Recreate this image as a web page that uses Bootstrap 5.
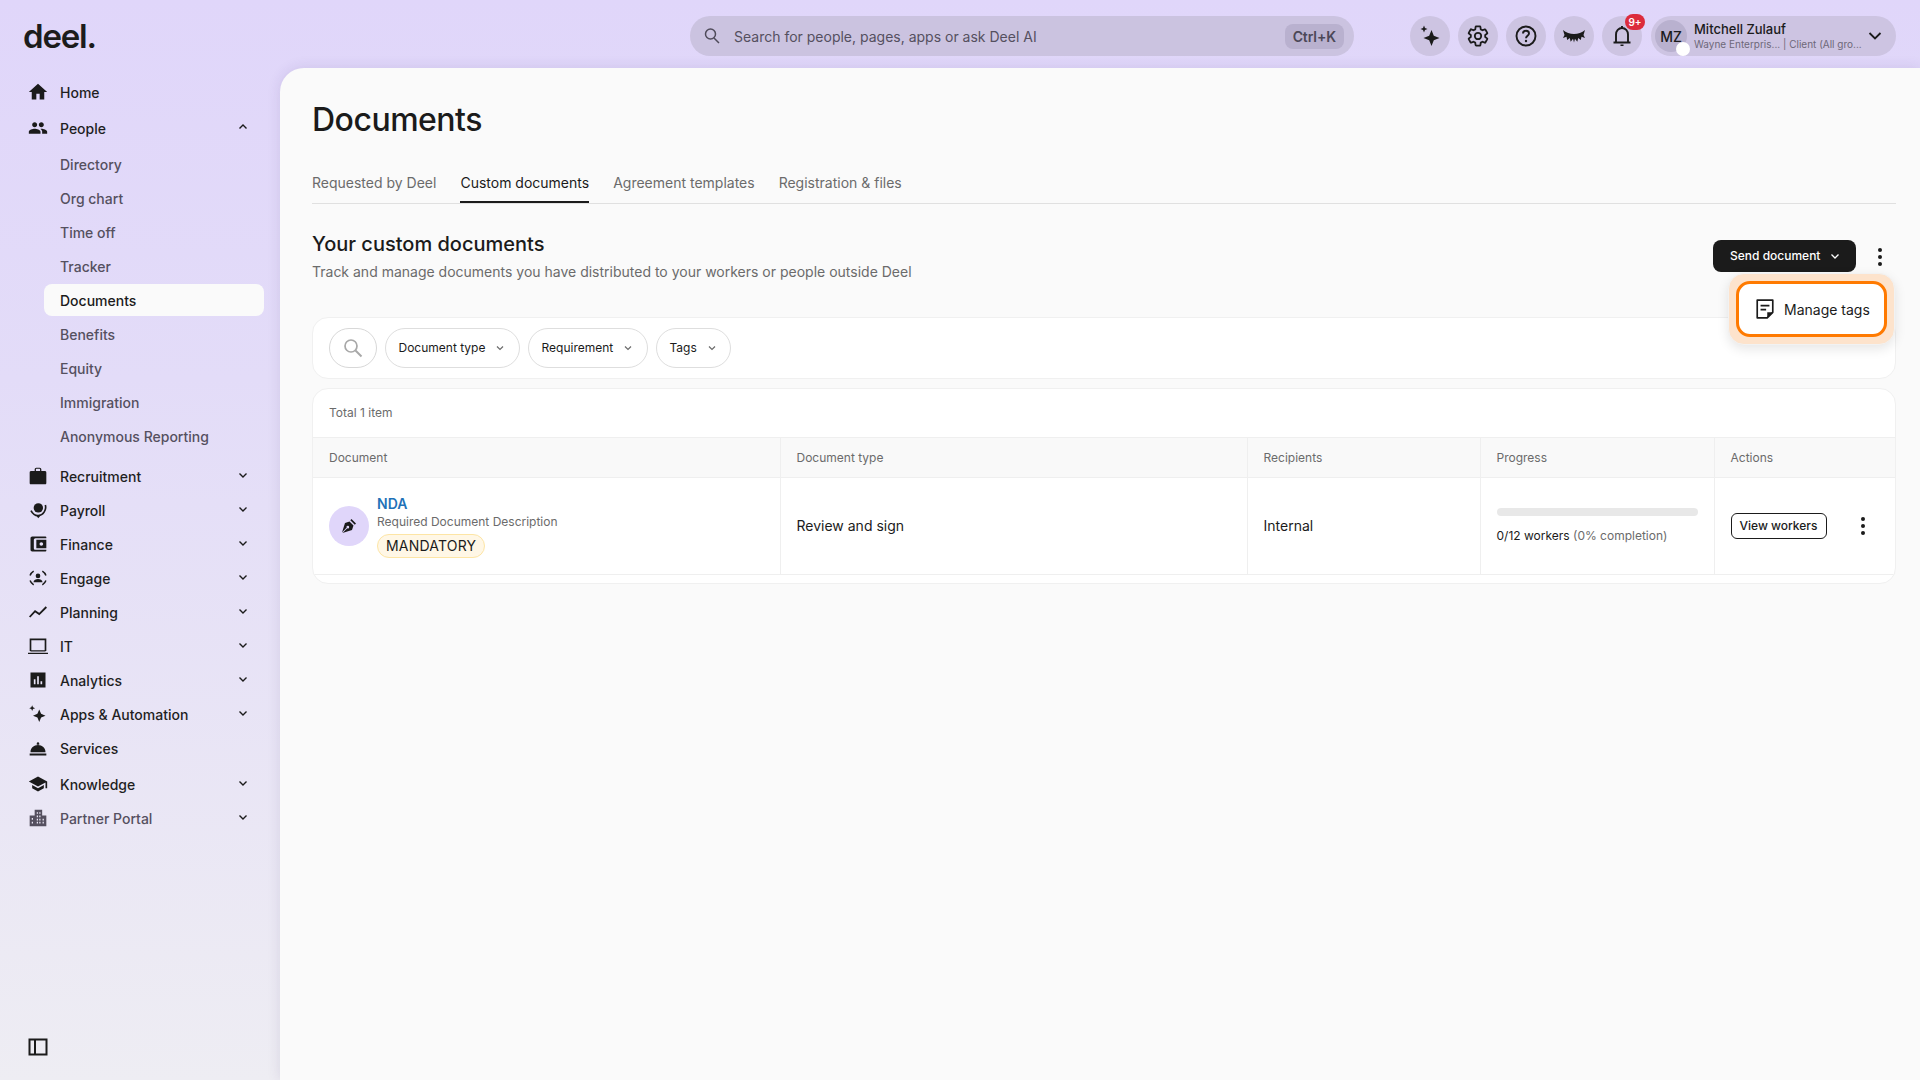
<!DOCTYPE html>
<html lang="en">
<head>
  <meta charset="UTF-8" />
  <meta name="viewport" content="width=device-width, initial-scale=1.0" />
  <title>Documents</title>
  <link href="https://cdn.jsdelivr.net/npm/bootstrap@5.3.0/dist/css/bootstrap.min.css" rel="stylesheet" />
  <style>
    body {
      font-family: Inter, "Liberation Sans", sans-serif;
      color: #1b1b1b;
      font-size: 14px;
      height: 100vh;
      overflow: hidden;
      background: linear-gradient(180deg, #e0d6fa 0%, #e3dcf8 35%, #eeedf3 100%);
    }
    /* sidebar */
    .side-col { width: 280px; flex: none; height: 100vh; position: relative; }
    .logo-box { height: 75px; padding: 14px 0 0 23px; font-size: 33px; font-weight: 600; letter-spacing: -1.2px; line-height: 44px; color: #1c1c1c; }
    .side-row { height: 34px; padding-left: 28px; font-weight: 500; gap: 12px; color: #1f1f1f; }
    .side-row .ico { width: 20px; height: 20px; flex: none; fill: #1b1b1b; }
    .side-row .chev { width: 10px; height: 10px; margin-left: auto; margin-right: 32px; margin-top: -2px; }
    .gap-t2 { margin-top: 2px; }
    .gap-t7 { margin-top: 7px; }
    .sub-list { margin-top: 3px; gap: 2px; }
    .sub-row { height: 32px; margin: 0 16px 0 44px; padding-left: 16px; color: #55505f; border-radius: 8px; font-weight: 450; }
    .sub-row.on { background: #fafafa; color: #1b1b1b; font-weight: 500; }
    .muted-row { color: #55505f; }
    .muted-row .ico { fill: #55505f; }
    .collapse-btn { position: absolute; left: 28px; bottom: 23px; width: 20px; height: 20px; }
    /* top bar */
    .right-col { flex: 1; min-width: 0; height: 100vh; }
    .top-strip { height: 68px; flex: none; padding: 16px 24px 0 410px; }
    .search-box { width: 664px; flex: none; height: 40px; border-radius: 20px; background: #cbc3e0; padding: 0 10px 0 12px; color: #55505f; margin-right: 48px; }
    .kbd-tag { margin-left: auto; background: #b9b1cf; border-radius: 8px; padding: 3px 8px; font-weight: 600; font-size: 14px; letter-spacing: -.1px; color: #4c4857; line-height: 19px; }
    .round-btn { width: 40px; height: 40px; border-radius: 50%; background: #cdc4e2; flex: none; position: relative; }
    .count-tag { position: absolute; top: -2px; right: -3px; background: #dc2c3c; color: #fff; font-size: 10px; font-weight: 600; border-radius: 8px; height: 16px; width: 20px; line-height: 16px; text-align: center; }
    .user-pill { width: 245px; flex: none; height: 40px; border-radius: 20px; background: #cdc4e2; padding: 0 14px 0 4px; margin-left: 1px; }
    .user-init { width: 32px; height: 32px; border-radius: 50%; background: #b9b1cf; font-size: 14px; position: relative; flex: none; font-weight: 500; margin-right: 7px; }
    .user-dot { position: absolute; right: -3px; bottom: -4px; width: 14px; height: 14px; border-radius: 50%; background: #fff; }
    .user-name { font-size: 13px; line-height: 15px; font-weight: 500; }
    .user-org { font-size: 10px; line-height: 14px; color: #6d6879; white-space: nowrap; }
    /* page */
    .page-area {
      flex: 1; background: #fafafa; border-top-left-radius: 24px;
      padding: 33px 24px 0 32px; box-shadow: 0 0 14px rgba(60, 40, 110, .12); position: relative;
    }
    .page-title { font-size: 32px; font-weight: 500; line-height: 38px; letter-spacing: -.5px; margin: 0; }
    .tab-strip { margin-top: 34px; border-bottom: 1px solid #e0e0e0; gap: 24px; }
    .tab-link { color: #6b6b6b; padding-bottom: 8px; line-height: 20px; border-bottom: 2px solid transparent; text-decoration: none; margin-bottom: -1px; height: 31px; }
    .tab-link.on { color: #1b1b1b; border-bottom-color: #1b1b1b; height: 30px; }
    .sec-head { margin-top: 28px; height: 85px; position: relative; }
    .sec-title { font-size: 20px; line-height: 24px; font-weight: 450; margin: 0 0 6px; }
    .sec-sub { color: #6b6b6b; line-height: 20px; margin: 0; }
    .send-btn { height: 32px; width: 143px; background: #1b1b1b; border-radius: 8px; color: #fff; font-size: 12px; font-weight: 500; border: 0; padding: 0 16px 0 17px; margin: 8px 40px 0 0; }
    .dot-col { display: flex; flex-direction: column; gap: 3px; align-items: center; width: 4px; }
    .dot-col i { width: 4px; height: 4px; border-radius: 50%; background: #1b1b1b; }
    .dots-top { position: absolute; right: 14px; top: 16px; }
    .tag-menu { position: absolute; right: 1px; top: 41px; width: 167px; height: 72px; border-radius: 16px; background: #fde3cc; border: 1px solid #f2f2f2; box-shadow: 0 4px 12px rgba(0, 0, 0, .1); padding: 7px; z-index: 5; }
    .tag-item { height: 56px; border: 3px solid #ff7a00; border-radius: 14px; background: #fff; padding-left: 16px; gap: 9px; }
    .panel-box { background: #fff; border: 1px solid #f0f0f0; border-radius: 16px; }
    .filter-box { height: 62px; padding: 0 16px; gap: 8px; }
    .chip-search { width: 48px; height: 40px; border-radius: 20px; border: 1px solid #d8d8d8; }
    .chip-btn { height: 40px; border: 1px solid #dedede; border-radius: 20px; background: #fff; font-size: 12px; padding: 0 12px 0 12.5px; color: #1b1b1b; font-weight: 400; gap: 10px; }
    .chip-doc { width: 135px; }
    .chip-req { width: 120px; }
    .chip-tag { width: 75px; }
    .list-box { margin-top: 9px; height: 196px; overflow: hidden; }
    .total-line { height: 48px; padding-left: 16px; font-size: 12px; color: #6b6b6b; display: flex; align-items: center; }
    .doc-table { table-layout: fixed; width: 100%; margin: 0; border-top: 1px solid #efefef; }
    .doc-table th { height: 40px; background: #f9f9f9; font-size: 12px; font-weight: 400; color: #6b6b6b; padding: 0 16px; vertical-align: middle; border-bottom: 1px solid #efefef; border-right: 1px solid #efefef; box-shadow: none; }
    .doc-table td { height: 97px; padding: 0 16px 1px; vertical-align: middle; border-bottom: 1px solid #efefef; border-right: 1px solid #efefef; color: #1b1b1b; box-shadow: none; }
    .doc-table th:last-child, .doc-table td:last-child { border-right: 0; }
    .c1, .c2 { width: 467px; }
    .c3 { width: 233px; }
    .c4 { width: 234px; }
    .doc-ava { width: 40px; height: 40px; border-radius: 50%; background: #e0d6fa; flex: none; }
    .doc-stack { margin-top: 2px; }
    .doc-name { color: #1f72b8; font-weight: 600; line-height: 18px; text-decoration: none; display: block; }
    .doc-desc { font-size: 12px; color: #6b6b6b; line-height: 18px; }
    .mand-tag { display: inline-block; background: #fff7e6; border: 1px solid #fde5a5; border-radius: 12px; height: 24px; line-height: 22px; padding: 0 8px; font-size: 14px; margin-top: 3px; letter-spacing: .2px; }
    .bar-track { height: 8px; background: #e8e8e8; border-radius: 4px; margin-bottom: 12px; }
    .prog-line { font-size: 12px; line-height: 16px; white-space: nowrap; }
    .prog-line span { color: #6b6b6b; }
    .view-btn { width: 96px; height: 26px; border: 1px solid #1b1b1b; border-radius: 6px; background: #fff; font-size: 12px; font-weight: 500; padding: 0; color: #1b1b1b; }
    .row-dots { margin-right: 14px; }
  </style>
</head>
<body>
  <div class="d-flex">
    <aside class="side-col">
      <div class="logo-box">deel.</div>
      <div class="side-row d-flex align-items-center">
        <svg class="ico" viewBox="0 0 24 24"><path d="M10 21v-7h4v7h5.5v-9H23L12 2 1 12h3.5v9z"/></svg>Home
      </div>
      <div class="side-row d-flex align-items-center gap-t2">
        <svg class="ico" viewBox="0 0 24 24"><path d="M16 11c1.66 0 2.99-1.34 2.99-3S17.66 5 16 5c-1.66 0-3 1.34-3 3s1.34 3 3 3zm-8 0c1.66 0 2.99-1.34 2.99-3S9.66 5 8 5C6.34 5 5 6.34 5 8s1.34 3 3 3zm0 2c-2.33 0-7 1.17-7 3.5V19h14v-2.5c0-2.33-4.67-3.5-7-3.5zm8 0c-.29 0-.62.02-.97.05 1.16.84 1.97 1.97 1.97 3.45V19h6v-2.5c0-2.33-4.67-3.5-7-3.5z"/></svg>People
        <svg class="chev" viewBox="0 0 10 10"><path d="M1.5 6.5 5 3l3.5 3.5" fill="none" stroke="#1b1b1b" stroke-width="1.4"/></svg>
      </div>
      <div class="sub-list d-flex flex-column">
        <div class="sub-row d-flex align-items-center">Directory</div>
        <div class="sub-row d-flex align-items-center">Org chart</div>
        <div class="sub-row d-flex align-items-center">Time off</div>
        <div class="sub-row d-flex align-items-center">Tracker</div>
        <div class="sub-row on d-flex align-items-center">Documents</div>
        <div class="sub-row d-flex align-items-center">Benefits</div>
        <div class="sub-row d-flex align-items-center">Equity</div>
        <div class="sub-row d-flex align-items-center">Immigration</div>
        <div class="sub-row d-flex align-items-center">Anonymous Reporting</div>
      </div>
      <div class="side-row d-flex align-items-center gap-t7">
        <svg class="ico" viewBox="0 0 24 24"><path fill-rule="evenodd" d="M8 6V4c0-1.100.9-2 2-2h4c1.100 0 2 .9 2 2v2h4.500c1.100 0 1.500.9 1.500 2v12c0 1.100-.4 2-1.500 2h-17C2.400 22 2 21.100 2 20V8c0-1.100.4-2 1.500-2zm1.500 0h5V4c0-.4-.2-.6-.6-.6h-3.800c-.4 0-.6.2-.6.6z"/></svg>Recruitment
        <svg class="chev" viewBox="0 0 10 10"><path d="M1.500 3.500 5 7l3.500-3.500" fill="none" stroke="#1b1b1b" stroke-width="1.400"/></svg>
      </div>
      <div class="side-row d-flex align-items-center">
        <svg class="ico" viewBox="0 0 24 24"><circle cx="12.400" cy="9.400" r="5.600"/><path d="M3.600 12.800C6 17.500 9 19 12.400 18.800 18 18.500 22.500 12 20.800 6" fill="none" stroke="#1b1b1b" stroke-width="2"/><path d="M9.800 18.500h5.200l-2.600 3.500z"/></svg>Payroll
        <svg class="chev" viewBox="0 0 10 10"><path d="M1.500 3.500 5 7l3.500-3.500" fill="none" stroke="#1b1b1b" stroke-width="1.400"/></svg>
      </div>
      <div class="side-row d-flex align-items-center">
        <svg class="ico" viewBox="0 0 24 24"><path fill-rule="evenodd" d="M5 3h16c.6 0 1 .4 1 1v1H9c-1.100 0-2 .9-2 2v10c0 1.100.9 2 2 2h13v1c0 .6-.4 1-1 1H5c-1.100 0-2-.9-2-2V5c0-1.100.9-2 2-2zm5 4h12v10H10zm6 2.800a2.200 2.200 0 1 0 0 4.400 2.200 2.200 0 0 0 0-4.400z"/></svg>Finance
        <svg class="chev" viewBox="0 0 10 10"><path d="M1.500 3.500 5 7l3.500-3.500" fill="none" stroke="#1b1b1b" stroke-width="1.400"/></svg>
      </div>
      <div class="side-row d-flex align-items-center">
        <svg class="ico" viewBox="0 0 24 24"><circle cx="12" cy="9.500" r="2.800"/><path d="M6.500 17c.4-2.600 2.800-3.800 5.500-3.800s5.100 1.200 5.500 3.800z"/><path d="M2.500 9C3.300 6.700 4.800 5 6.800 3.800M17.200 3.800c2 1.200 3.500 2.900 4.300 5.200M2.500 15c.8 2.300 2.300 4 4.300 5.200M17.200 20.200c2-1.200 3.500-2.900 4.300-5.200" fill="none" stroke="#1b1b1b" stroke-width="1.800"/></svg>Engage
        <svg class="chev" viewBox="0 0 10 10"><path d="M1.500 3.500 5 7l3.500-3.500" fill="none" stroke="#1b1b1b" stroke-width="1.400"/></svg>
      </div>
      <div class="side-row d-flex align-items-center">
        <svg class="ico" viewBox="0 0 24 24"><path d="M2 18l6.500-7 5 3.500L22 6" fill="none" stroke="#1b1b1b" stroke-width="2.200"/></svg>Planning
        <svg class="chev" viewBox="0 0 10 10"><path d="M1.500 3.500 5 7l3.500-3.500" fill="none" stroke="#1b1b1b" stroke-width="1.400"/></svg>
      </div>
      <div class="side-row d-flex align-items-center">
        <svg class="ico" viewBox="0 0 24 24"><path d="M3 18V4h18v14" fill="none" stroke="#1b1b1b" stroke-width="2"/><path d="M3 17h18v1.500H3zM0 20h24v1.500H0z"/></svg>IT
        <svg class="chev" viewBox="0 0 10 10"><path d="M1.500 3.500 5 7l3.500-3.500" fill="none" stroke="#1b1b1b" stroke-width="1.400"/></svg>
      </div>
      <div class="side-row d-flex align-items-center">
        <svg class="ico" viewBox="0 0 24 24"><path fill-rule="evenodd" d="M3 3h18v18H3zm4 8v6h2v-6zm4-3.500V17h2V7.500zm4 6V17h2v-3.500z"/></svg>Analytics
        <svg class="chev" viewBox="0 0 10 10"><path d="M1.500 3.500 5 7l3.500-3.500" fill="none" stroke="#1b1b1b" stroke-width="1.400"/></svg>
      </div>
      <div class="side-row d-flex align-items-center">
        <svg class="ico" viewBox="0 0 24 24"><path d="M13.500 6.500l2.200 5.300L21 14l-5.300 2.200-2.200 5.300-2.200-5.300L6 14l5.300-2.200zM5 1.500l1 2.500 2.500 1L6 6 5 8.500 4 6 1.500 5 4 4z"/></svg>Apps &amp; Automation
        <svg class="chev" viewBox="0 0 10 10"><path d="M1.500 3.500 5 7l3.500-3.500" fill="none" stroke="#1b1b1b" stroke-width="1.400"/></svg>
      </div>
      <div class="side-row d-flex align-items-center">
        <svg class="ico" viewBox="0 0 24 24"><path d="M3 17c0-5 4-8.500 9-8.500s9 3.500 9 8.500zM10.500 6.500c0-.8.7-1.500 1.500-1.500s1.500.7 1.500 1.500v1.500h-3zM2 18.500h20V21H2z"/></svg>Services
      </div>
      <div class="side-row d-flex align-items-center gap-t2">
        <svg class="ico" viewBox="0 0 24 24"><path d="M5 13.180v4L12 21l7-3.820v-4L12 17l-7-3.820zM12 3 1 9l11 6 9-4.910V17h2V9L12 3z"/></svg>Knowledge
        <svg class="chev" viewBox="0 0 10 10"><path d="M1.500 3.500 5 7l3.500-3.500" fill="none" stroke="#1b1b1b" stroke-width="1.400"/></svg>
      </div>
      <div class="side-row muted-row d-flex align-items-center">
        <svg class="ico" viewBox="0 0 24 24"><path fill-rule="evenodd" d="M8 2h9v7h5v13H2V9h6zm2.500 3v2h1.500V5zm3 0v2H15V5zm-3 4v2h1.500V9zm3 0v2H15V9zm-9 3v2H6v-2zm6 1v2h1.500v-2zm3 0v2H15v-2zm4 0v2H19v-2zm-13 3.500v2H6v-2zm6 0v2h1.500v-2zm3 0v2H15v-2zm4 0v2H19v-2z"/></svg>Partner Portal
        <svg class="chev" viewBox="0 0 10 10"><path d="M1.500 3.500 5 7l3.500-3.500" fill="none" stroke="#1b1b1b" stroke-width="1.400"/></svg>
      </div>
      <svg class="collapse-btn" viewBox="0 0 20 20"><rect x="1.500" y="2.500" width="17" height="15" fill="none" stroke="#1b1b1b" stroke-width="2"/><path d="M7 3v14" stroke="#1b1b1b" stroke-width="2"/></svg>
    </aside>

    <div class="right-col d-flex flex-column">
      <div class="top-strip d-flex align-items-start gap-2">
        <div class="search-box d-flex align-items-center gap-2">
          <svg width="20" height="20" viewBox="0 0 20 20"><circle cx="8.500" cy="8" r="5" fill="none" stroke="#4f4b5a" stroke-width="1.500"/><path d="M12 12l5 5" stroke="#4f4b5a" stroke-width="1.500"/></svg>
          <span class="ms-1">Search for people, pages, apps or ask Deel AI</span>
          <span class="kbd-tag">Ctrl+K</span>
        </div>
        <div class="round-btn d-flex align-items-center justify-content-center">
          <svg width="24" height="24" viewBox="0 0 24 24" fill="#1b1b1b"><path d="M13.500 6l2.300 5.700L21.500 14l-5.700 2.300-2.300 5.700-2.300-5.700L5.500 14l5.700-2.300zM6 1.500l1 2.500 2.500 1L7 6 6 8.500 5 6 2.500 5 5 4z"/></svg>
        </div>
        <div class="round-btn d-flex align-items-center justify-content-center">
          <svg width="24" height="24" viewBox="0 0 24 24"><path fill="none" stroke="#1b1b1b" stroke-width="1.800" d="M19.140 12.940c.04-.3.06-.61.06-.94 0-.32-.02-.64-.07-.94l2.030-1.580c.18-.14.230-.41.120-.61l-1.920-3.320c-.12-.22-.37-.29-.59-.22l-2.390.96c-.5-.38-1.030-.7-1.620-.94l-.36-2.540c-.04-.24-.24-.41-.48-.41h-3.840c-.24 0-.43.170-.47.410l-.36 2.540c-.59.240-1.130.570-1.620.940l-2.390-.96c-.22-.08-.47 0-.59.220L2.740 8.870c-.12.210-.08.470.120.610l2.030 1.580c-.05.300-.09.630-.09.940s.02.640.07.940l-2.030 1.580c-.18.140-.23.410-.12.610l1.920 3.320c.12.220.37.290.59.220l2.390-.96c.5.380 1.030.7 1.620.94l.36 2.540c.05.240.24.410.48.410h3.840c.24 0 .44-.17.47-.41l.36-2.540c.59-.24 1.130-.56 1.620-.94l2.390.96c.22.080.47 0 .59-.22l1.920-3.320c.12-.22.07-.47-.12-.61l-2.010-1.580zM12 15.200c-1.760 0-3.200-1.440-3.200-3.200s1.440-3.200 3.200-3.200 3.200 1.440 3.200 3.200-1.440 3.200-3.200 3.200z"/></svg>
        </div>
        <div class="round-btn d-flex align-items-center justify-content-center">
          <svg width="24" height="24" viewBox="0 0 24 24"><circle cx="12" cy="12" r="9.500" fill="none" stroke="#1b1b1b" stroke-width="1.900"/><path d="M9 9.500C9 7.800 10.300 6.800 12 6.800s3 1.100 3 2.600c0 2.300-3 2.300-3 4.800" fill="none" stroke="#1b1b1b" stroke-width="1.900"/><circle cx="12" cy="17" r="1.200" fill="#1b1b1b"/></svg>
        </div>
        <div class="round-btn d-flex align-items-center justify-content-center">
          <svg width="24" height="24" viewBox="0 0 24 24" fill="#1b1b1b"><path d="M1 6c3 2.500 7 4 11 4s8-1.500 11-4L21.500 11 23 14l-3.500-1.200-.7 3.200-2.600-2-.9 3.800L13 14.800 12 18.500 11 14.800 8.700 17.800 7.800 14 5.200 16 4.500 12.800 1 14l1.500-3z"/></svg>
        </div>
        <div class="round-btn d-flex align-items-center justify-content-center">
          <svg width="24" height="24" viewBox="0 0 24 24"><path d="M6 18v-7.500C6 7 8.600 4 12 4s6 3 6 6.500V18M3.500 18.500h17" fill="none" stroke="#1b1b1b" stroke-width="1.900"/><path d="M10.500 20.500h3V22h-3zM11 2h2v2.500h-2z" fill="#1b1b1b"/></svg>
          <span class="count-tag">9+</span>
        </div>
        <div class="user-pill d-flex align-items-center">
          <div class="user-init d-flex align-items-center justify-content-center">MZ<span class="user-dot"></span></div>
          <div class="flex-grow-1">
            <div class="user-name">Mitchell Zulauf</div>
            <div class="user-org">Wayne Enterpris... | Client (All gro...</div>
          </div>
          <svg width="14" height="14" viewBox="0 0 14 14"><path d="M1.500 4l5.500 5.500L12.500 4" fill="none" stroke="#1b1b1b" stroke-width="1.800"/></svg>
        </div>
      </div>

      <main class="page-area">
        <h1 class="page-title">Documents</h1>
        <div class="tab-strip d-flex">
          <a class="tab-link" href="#">Requested by Deel</a>
          <a class="tab-link on" href="#">Custom documents</a>
          <a class="tab-link" href="#">Agreement templates</a>
          <a class="tab-link" href="#">Registration &amp; files</a>
        </div>

        <div class="sec-head d-flex justify-content-between">
          <div>
            <h2 class="sec-title">Your custom documents</h2>
            <p class="sec-sub">Track and manage documents you have distributed to your workers or people outside Deel</p>
          </div>
          <button class="send-btn d-flex align-items-center justify-content-between" type="button">
            Send document
            <svg width="10" height="10" viewBox="0 0 10 10"><path d="M1.500 3.500 5 7l3.500-3.500" fill="none" stroke="#fff" stroke-width="1.300"/></svg>
          </button>
          <div class="dot-col dots-top"><i></i><i></i><i></i></div>
          <div class="tag-menu">
            <div class="tag-item d-flex align-items-center">
              <svg width="20" height="20" viewBox="0 0 18 18"><path d="M2 1h14v11l-5 5H2z" fill="none" stroke="#1b1b1b" stroke-width="1.500" stroke-linejoin="round"/><path d="M5 6h8M5 9.500h5" stroke="#1b1b1b" stroke-width="1.500"/><path d="M11 17v-5h5z" fill="#1b1b1b"/></svg>
              Manage tags
            </div>
          </div>
        </div>

        <div class="panel-box filter-box d-flex align-items-center">
          <div class="chip-search d-flex align-items-center justify-content-center">
            <svg width="22" height="22" viewBox="0 0 22 22"><circle cx="9" cy="9" r="6" fill="none" stroke="#a8a8a8" stroke-width="1.700"/><path d="M13.500 13.500l6 6" stroke="#a8a8a8" stroke-width="2"/></svg>
          </div>
          <button class="chip-btn chip-doc d-flex align-items-center" type="button">Document type
            <svg width="10" height="10" viewBox="0 0 10 10"><path d="M2 3.500 5 6.500l3-3" fill="none" stroke="#6b6b6b" stroke-width="1.200"/></svg></button>
          <button class="chip-btn chip-req d-flex align-items-center" type="button">Requirement
            <svg width="10" height="10" viewBox="0 0 10 10"><path d="M2 3.500 5 6.500l3-3" fill="none" stroke="#6b6b6b" stroke-width="1.200"/></svg></button>
          <button class="chip-btn chip-tag d-flex align-items-center" type="button">Tags
            <svg width="10" height="10" viewBox="0 0 10 10"><path d="M2 3.500 5 6.500l3-3" fill="none" stroke="#6b6b6b" stroke-width="1.200"/></svg></button>
        </div>

        <div class="panel-box list-box">
          <div class="total-line">Total 1 item</div>
          <table class="table doc-table">
            <thead>
              <tr>
                <th class="c1">Document</th>
                <th class="c2">Document type</th>
                <th class="c3">Recipients</th>
                <th class="c4">Progress</th>
                <th>Actions</th>
              </tr>
            </thead>
            <tbody>
              <tr>
                <td>
                  <div class="d-flex align-items-center gap-2">
                    <div class="doc-ava d-flex align-items-center justify-content-center">
                      <svg width="16" height="16" viewBox="0 0 16 16" fill="#1b1b1b"><path d="M10.500 1 15 5.500l-1.200 1.200-4.500-4.500zM8.500 3.500l4 4-1.500 4.500L1.500 15l4.800-4.800a1.300 1.300 0 1 0-.6-.6L1 14.500 4 5z"/></svg>
                    </div>
                    <div class="doc-stack">
                      <a class="doc-name" href="#">NDA</a>
                      <div class="doc-desc">Required Document Description</div>
                      <span class="mand-tag">MANDATORY</span>
                    </div>
                  </div>
                </td>
                <td>Review and sign</td>
                <td>Internal</td>
                <td>
                  <div class="bar-track"></div>
                  <div class="prog-line">0/12 workers <span>(0% completion)</span></div>
                </td>
                <td>
                  <div class="d-flex align-items-center justify-content-between">
                    <button class="view-btn" type="button">View workers</button>
                    <div class="dot-col row-dots"><i></i><i></i><i></i></div>
                  </div>
                </td>
              </tr>
            </tbody>
          </table>
        </div>
      </main>
    </div>
  </div>
  <script src="https://cdn.jsdelivr.net/npm/bootstrap@5.3.0/dist/js/bootstrap.bundle.min.js"></script>
</body>
</html>
